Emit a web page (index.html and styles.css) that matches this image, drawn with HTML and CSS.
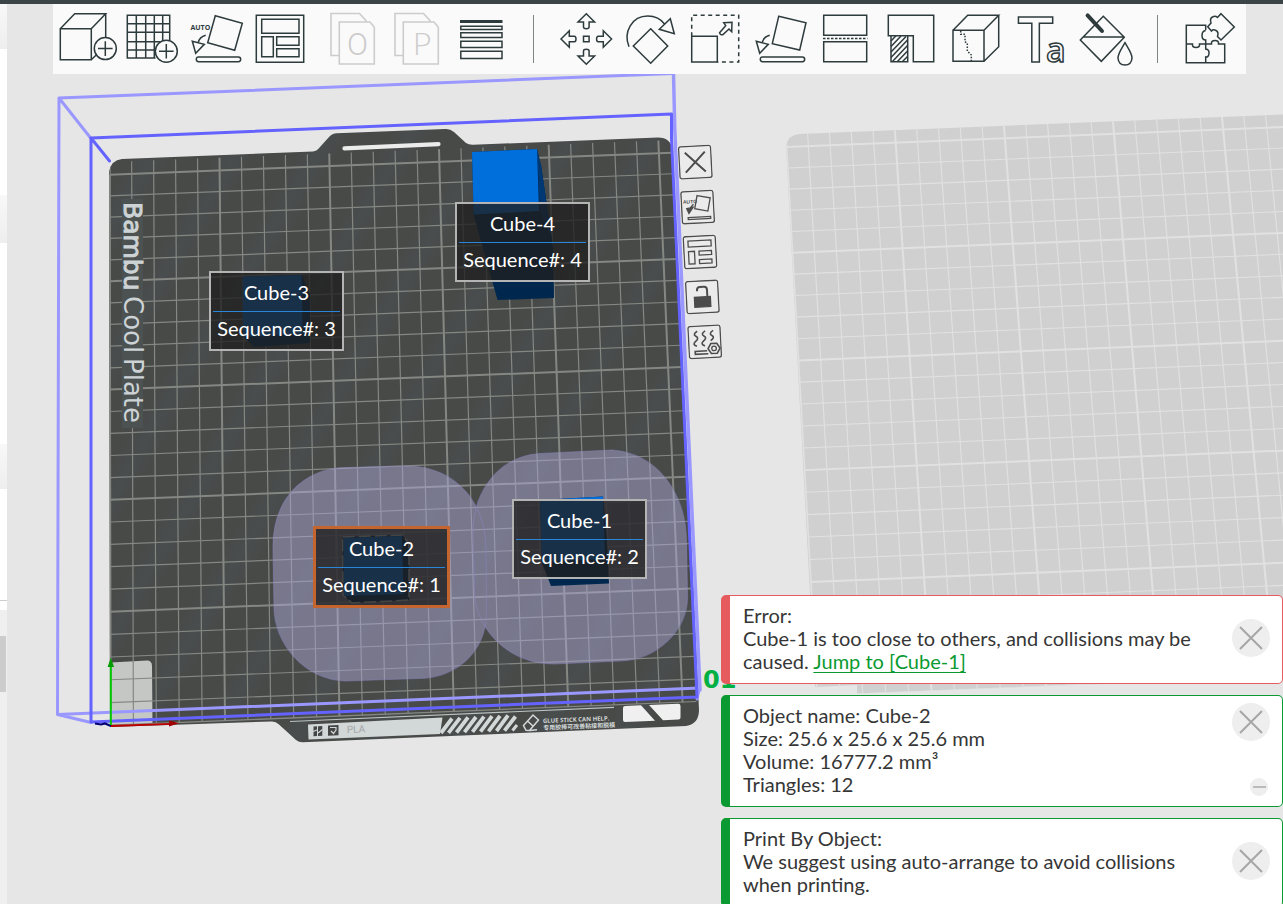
FILE: index.html
```html
<!DOCTYPE html>
<html lang="en">
<head>
<meta charset="utf-8">
<title>Prepare - Print By Object</title>
<link rel="stylesheet" href="styles.css">
</head>
<body>
<header class="titlebar"></header>
<div class="workspace">
  <aside class="sidebar" aria-hidden="true">
    <div class="band band-top"></div>
    <div class="panel panel-printer"></div>
    <div class="band band-filament"></div>
    <div class="panel panel-filament"></div>
    <div class="band band-process"></div>
    <div class="panel panel-process"></div>
    <div class="sidebar-list"><div class="thumb"></div></div>
  </aside>
  <main class="viewport">
    <svg class="scene" viewBox="7 4 1276 900" aria-hidden="true">
      <defs>
        <linearGradient id="steel" gradientUnits="userSpaceOnUse" x1="110" y1="160" x2="140" y2="178" spreadMethod="reflect">
          <stop offset="0" stop-color="#484a48"/><stop offset=".5" stop-color="#484a48"/><stop offset="1" stop-color="#494d4e"/>
        </linearGradient>
        <clipPath id="plateClip"><path d="M109.500 172Q111 160 122 159L658 138Q671 138 673 150L698 702L111 726Z"/></clipPath>
        <clipPath id="plateClip2"><path d="M786 146Q788 135 799 134L1344 112L1403 672L857 694V686L816 688Z"/></clipPath>
      </defs>

      <path d="M786 146Q788 135 799 134L1344 112L1403 672L857 693.500V685L815 687Z" fill="#d0d0d0"/>
      <g id="grid2" clip-path="url(#plateClip2)" stroke="#e1e1e1"></g>

      <path d="M109 172Q111 160 122 159L313 151.500Q317 151 320 147L329 137Q332 133.500 337 133.300L445 129Q450 128.500 454 132L466 143Q469 145 473 144.800L658 137.500Q671 137.500 672.500 150L699 710Q699 724 686 726L303 742.300Q299 742.500 296 740L279 724.500Q276 721.500 272 721.500L110 727Z" fill="url(#steel)"/>
      <path d="M344.500 148.300L438.500 144.200" stroke="#ececec" stroke-width="4.200" stroke-linecap="round"/>
      <path d="M111 662.500L147 660.500Q152 660.500 152 666L152.500 723.500L111 726Z" fill="#c5c7c5"/>
      <g id="grid1" clip-path="url(#plateClip)" stroke="#848782"></g>
      <path d="M109.800 175L110.500 662" stroke="#848782" stroke-width="1.400"/>
      <path d="M290 721.500L614 707.400" stroke="#b9c2c2" stroke-width="1.200"/>

      <g fill="#d2d7d7">
        <path d="M308 724.500L442.500 717.600L440 734L308.500 739.500Z"/>
      </g>
      <g fill="#454746">
        <path d="M313.500 726.500L317 726.300V736L313.500 736.200ZM318 726.200L322.300 726V735.700L318 735.900Z"/>
        <path d="M328 725.600L338.500 725.100V735.200L328 735.700Z"/>
      </g>
      <path d="M313 731.500L317 730M318 733L322.500 729.500M330 727.500H336V730L333.500 733.500L331 731" stroke="#d2d7d7" stroke-width="1.200" fill="none"/>
      <text class="strip-material" x="347" y="733" transform="rotate(-2.300 347 733)">PLA</text>
      <g stroke="#d2d7d7" stroke-width="3.800">
        <path d="M441 733L452 718.500M448.500 732.800L460 717.800M456.500 732.500L468 717.400M464.500 732.200L476 717M472.500 731.900L484 716.600M480.500 731.600L492 716.200M488.500 731.300L500 715.800M496.500 731L508 715.400M504.500 730.700L515.500 716.500"/>
        <path d="M512.500 730.500L517 725" stroke-width="3"/>
      </g>
      <g fill="none" stroke="#d2d7d7" stroke-width="1.500">
        <path d="M523.500 725.500L533 715L538.500 720L529.500 730.500L526 730.300ZM527.500 721L533.500 726.500M530 730.500L537 729.800"/>
      </g>
      <g transform="rotate(-2.300 543 723)">
        <text class="strip-note" x="543" y="723">GLUE STICK CAN HELP.</text>
        <text class="strip-note-cjk" x="543" y="730">专用胶棒可改善粘接和脱模</text>
      </g>
      <path d="M625 706L641 705.200L655 720.700L625 722Q623 722 623 720V708Q623 706 625 706ZM649 705L678 703.800Q680.500 703.700 680.500 706V717.500Q680.500 719.500 678.500 719.600L663 720.200Z" fill="#f0f0f0"/>

      <rect x="122" y="199" width="21" height="229" fill="#4c5152"/>
      <text class="plate-name plate-brand" transform="translate(124 202) rotate(90)">Bambu</text>
      <text class="plate-name" transform="translate(124 296) rotate(90)">Cool</text>
      <text class="plate-name" transform="translate(124 358) rotate(90)">Plate</text>

      <g fill="#aca8d6" opacity=".48">
        <path d="M273 547C273 500 302 469 345 467.500L408 466C456 467 486 503 486 550L486.500 612C486 655 453 678 418 678.500L345 681C303 679 275 643 274 608Z"/>
        <path d="M473 530C474 490 500 456 540 453.500L612 450C656 453 687 492 686.500 545L687.500 596C688 630 657 660 620 661L555 664C505 664 474 625 474.500 590Z"/>
      </g>
      <g fill="none" stroke="#8a86bd" stroke-opacity=".5" stroke-width="1.200">
        <path d="M273 547C273 500 302 469 345 467.500L408 466C456 467 486 503 486 550L486.500 612C486 655 453 678 418 678.500L345 681C303 679 275 643 274 608Z"/>
        <path d="M473 530C474 490 500 456 540 453.500L612 450C656 453 687 492 686.500 545L687.500 596C688 630 657 660 620 661L555 664C505 664 474 625 474.500 590Z"/>
      </g>

      <path d="M472 152L537 149L541 165L553.500 250L554 298L497.500 300L473.600 214.500Z" fill="#00284f"/>
      <path d="M537 149L541 165L552 240L540 211Z" fill="#003873"/>
      <path d="M472 152L537 149L539 211L473.600 214.500Z" fill="#006fdc"/>
      <path d="M242.700 276.700L301.700 275L310 294V343L254 347L243 336Z" fill="#002f5c"/>
      <path d="M242.700 276.700L301.700 275L302.500 334L243 337Z" fill="#006fdc"/>
      <path d="M540 500L603 496.500L607 540L609 583.500L551 586L542 563Z" fill="#00284f"/>
      <path d="M540 500L603 496.500L605 559L542 562Z" fill="#006fdc"/>
      <path d="M342.700 537L402.700 535L409 544V600L352 603L343 595Z" fill="#00284f" stroke="#c8ccce" stroke-width="1.500" stroke-dasharray="12 4"/>
      <path d="M343.500 538L402 536L403.500 594L344 596Z" fill="#006fdc"/>

      <g fill="none" stroke-width="3" stroke-linejoin="round" stroke-linecap="round">
        <path d="M91 138.500L59 98L673 73.500M59 98L57.500 714.500L91 722.500M57.500 714.500L699.500 688L697 699" stroke="#9a98ff"/>
        <path d="M673.500 73.500L674.800 130L700 690" stroke="#9a98ff" stroke-width="3.500"/>
        <path d="M109.500 161L91 138L671.500 114V138L697 697L91 722L91 138" stroke="#6563ff"/>
      </g>

      <path d="M95 723.500L101 724.500L105 723.500L111 726" stroke="#000073" stroke-width="2.200" fill="none"/>
      <path d="M110.800 725V664" stroke="#00c800" stroke-width="2"/>
      <path d="M110.800 657.500L114 667H107.600Z" fill="#009b00"/>
      <path d="M111 726L172 723.800" stroke="#c00000" stroke-width="1.800"/>
      <path d="M179 723.300L169 720.500V726.500Z" fill="#a00000"/>
    </svg>

    <span class="plate-number">01</span>

    <div class="object-label cube-3"><span>Cube-3</span><span>Sequence#: 3</span></div>
    <div class="object-label cube-4"><span>Cube-4</span><span>Sequence#: 4</span></div>
    <div class="object-label cube-1"><span>Cube-1</span><span>Sequence#: 2</span></div>
    <div class="object-label cube-2 selected"><span>Cube-2</span><span>Sequence#: 1</span></div>

    <div class="plate-actions">
      <button type="button" aria-label="Delete plate"><svg viewBox="0 0 34 34"><rect x="1" y="1" width="32" height="32" rx="2"/><path d="M7 7L27 27M27 7L7 27" stroke-width="2"/></svg></button>
      <button type="button" aria-label="Auto orient"><svg viewBox="0 0 34 34"><rect x="1" y="1" width="32" height="32" rx="2"/><path d="M17 5.500L30 8.500L27 21.500L14 18.500ZM7 27H29.500V29H7Z"/><path d="M6 18L12.500 17L8 23ZM13 14L9 18" fill="#4c4c4c"/><text x="2.500" y="13" class="auto-small">AUTO</text></svg></button>
      <button type="button" aria-label="Arrange"><svg viewBox="0 0 34 34"><rect x="1" y="1" width="32" height="32" rx="2"/><path d="M5.500 5.500H28.500V11.500H5.500ZM5.500 16H11.500V28.500H5.500ZM16 16H28.500V20H16ZM16 24.500H28.500V28.500H16Z"/></svg></button>
      <button type="button" aria-label="Lock plate"><svg viewBox="0 0 34 34"><rect x="1" y="1" width="32" height="32" rx="2"/><rect x="9" y="17" width="16" height="10" fill="#4c4c4c"/><path d="M22 17V10Q22 7 19 7H15Q12 7 12 10V11" stroke-width="2"/></svg></button>
      <button type="button" aria-label="Plate settings"><svg viewBox="0 0 34 34"><rect x="1" y="1" width="32" height="32" rx="2"/><path d="M10 6Q5 9 8.500 11T8 16T9 21M18 6Q13 9 16.500 11T16 16T17 21M26 6Q21 9 24.500 11T23 16M19 26H7V29H20M20 24L23 19H29L32 24L29 29H23Z" stroke-width="1.600"/><circle cx="26" cy="24" r="2.300"/></svg></button>
    </div>

    <nav class="toolbar" aria-label="Tools">
      <div class="tool-group">
        <button type="button" aria-label="Add"><svg viewBox="53 4 65 70"><path d="M60.300 28.700H91.300V59.700H60.300ZM60.300 28.700L74.700 13.700H105.700L91.300 28.700M105.700 13.700V37.500M91.300 59.700L96.700 54.500"/><circle cx="105.300" cy="48.600" r="11"/><path d="M98 48.600H112.600M105.300 41.300V55.900"/></svg></button>
        <button type="button" aria-label="Add plate"><svg viewBox="118 4 65 70"><path d="M155.500 58H127.300V15.300H169.700V40M136.300 15.300V58M145.700 15.300V58M154.300 15.300V58M162.700 15.300V41M127.300 23.700H169.700M127.300 32.300H169.700M127.300 41.700H160M127.300 50H155"/><circle cx="166.300" cy="51.300" r="11"/><path d="M159 51.300H173.600M166.300 44V58.600"/></svg></button>
        <button type="button" aria-label="Auto orient"><svg viewBox="183 4 65 70"><text class="auto-text" x="190.500" y="29.500">AUTO</text><path d="M215.300 15.700L242.300 23.300L234.700 50.300L207.700 42.700ZM192.300 41.300L204.300 44.300L195.700 53.300ZM205.700 35.300Q199.500 37 198.300 42.500M198.600 57H238.400Q240.700 57 240.700 59.300T238.400 61.700H198.600Q196.300 61.700 196.300 59.300T198.600 57Z"/></svg></button>
        <button type="button" aria-label="Arrange all"><svg viewBox="248 4 65 70"><path d="M256.300 15.300H303.700V62.300H256.300ZM261.700 19.300H299V33.300H261.700ZM261.700 36.700H273.300V56.700H261.700ZM276.700 36.700H299V45.300H276.700ZM276.700 48.700H299V56.700H276.700Z"/></svg></button>
      </div>
      <div class="tool-group">
        <button type="button" disabled aria-label="Split to objects"><svg viewBox="319 4 65 70"><path d="M339.300 55.500H331V13.500H359.500L366 20.500V22M339.300 22H370L374.300 27.300V64H339.300Z"/><text class="doc-letter doc-o" x="357.500" y="54.500">O</text></svg></button>
        <button type="button" disabled aria-label="Split to parts"><svg viewBox="384 4 65 70"><path d="M403.300 55.500H395V13.500H423.500L430 20.500V22M403.300 22H434L438.300 27.300V64H403.300Z"/><text class="doc-letter" x="422" y="54.500">P</text></svg></button>
        <button type="button" aria-label="Variable layer height"><svg viewBox="449 4 65 70"><path d="M460 21.500H502.500" stroke-width="3"/><path d="M460.800 26.200H502V29.500H460.800ZM460.800 32.700H502V37.500H460.800ZM460.800 41.300H502V47.500H460.800ZM460.800 51.300H502V58.600H460.800Z"/></svg></button>
      </div>
      <div class="separator"></div>
      <div class="tool-group">
        <button type="button" aria-label="Move"><svg viewBox="553 4 65 70"><path d="M583.500 36.200H589.100V41.800H583.500Z"/><path id="arrowUp" d="M586.300 13.700L594.600 22H589.100V27Q589.100 28.700 586.300 28.700T583.500 27V22H578Z"/><use href="#arrowUp" transform="rotate(90 586.300 39)"/><use href="#arrowUp" transform="rotate(180 586.300 39)"/><use href="#arrowUp" transform="rotate(270 586.300 39)"/></svg></button>
        <button type="button" aria-label="Rotate"><svg viewBox="618 4 65 70"><path d="M650.700 28.700L667.700 46L650.700 63.300L633.300 46ZM629 46.700C623 32 632 16 647.700 16C655 16 661 19 665 24.500M670.300 18.700L674.300 33.700L659.300 29.300Z"/></svg></button>
        <button type="button" aria-label="Scale"><svg viewBox="683 4 65 70"><path d="M691.700 36.300V15.300H738.700V62H717.300" stroke-dasharray="4 3.500"/><path d="M691.700 36.300H717.300V62H691.700ZM723.700 22.700L732 22.300L731.700 31.700L729 29L723 34.500Q720.500 35.500 719.600 32.700L725.700 25.700Z"/></svg></button>
        <button type="button" aria-label="Lay on face"><svg viewBox="748 4 65 70"><path d="M778.700 16.300L806 22.700L799.700 50L772.300 43.700ZM756.300 41.300L768.300 44.300L759.700 53.300ZM769.700 35.300Q763.500 37 762.300 42.500M762.600 57H802.400Q804.700 57 804.700 59.300T802.400 61.700H762.600Q760.300 61.700 760.300 59.300T762.600 57Z"/></svg></button>
        <button type="button" aria-label="Cut"><svg viewBox="813 4 65 70"><path d="M823.700 15.300H866.700V35.300H823.700ZM823.700 41.700H866.700V61.700H823.700Z"/><path d="M823 38.500H867.500" stroke-dasharray="2.500 1.500"/></svg></button>
        <button type="button" aria-label="Support painting"><svg viewBox="878 4 65 70"><path d="M888.300 15.300H933.700V61.700H913.300V35.700H888.300ZM891 35.700H907.700V61.700H891Z"/><path d="M891 41L896 35.700M891 46.500L901 36M891 52L906 36.500M891 57.500L907.500 40M892.500 61.500L907.500 45.500M897.500 61.500L907.500 51M902.500 61.500L907.500 56.500"/></svg></button>
        <button type="button" aria-label="Seam painting"><svg viewBox="943 4 65 70"><path d="M953 30.300H984V61.300H953ZM953 30.300L967.700 15.300H998.700L984 30.300M998.700 15.300V46.700L984 61.300"/><path d="M960.700 31V34.300H965V41.700L967.300 43.300V51L971.300 55V61" stroke-dasharray="1.500 1.500"/></svg></button>
        <button type="button" aria-label="Text shape"><svg viewBox="1008 4 65 70"><text class="shape-text shape-t" x="1017.500" y="61.500">T</text><text class="shape-text shape-a" x="1046" y="61.500">a</text></svg></button>
        <button type="button" aria-label="Color painting"><svg viewBox="1073 4 65 70"><path d="M1103.300 16.300L1124.300 37.300L1101.300 61.300L1080.300 40ZM1083.500 37H1124"/><path d="M1087.600 15.400L1102 31" stroke-width="4" stroke-linecap="round"/><path d="M1125 42.700C1128 48 1132 53 1132 58Q1131.500 65 1125 65T1118 58C1118 53 1122 48 1125 42.700Z"/></svg></button>
      </div>
      <div class="separator"></div>
      <div class="tool-group">
        <button type="button" aria-label="Assembly view"><svg viewBox="1177 4 65 70"><path d="M1205.700 30V25.300H1186.300V62.700H1224.700V44H1218.500Q1219 40.500 1215 40.500T1211.500 44H1205.700V40Q1202 40 1202 35.500T1205.700 30.500M1186.300 44H1192.500Q1192 47.500 1196 47.500T1199.500 44H1205.700V49Q1209.500 49.500 1209 53.500T1205.700 57V62.700"/><path d="M1221 13.700L1234.300 27L1221 40L1217.500 36.500Q1219 32 1216 30.500T1211.500 31L1207.700 26.700L1211 23Q1209.500 18.500 1212.500 17T1217.500 17.500Z"/></svg></button>
      </div>
    </nav>

    <section class="toasts" aria-label="Notifications">
      <article class="toast error">
        <p>Error:<br>Cube-1 is too close to others, and collisions may be caused. <a href="#cube-1">Jump to [Cube-1]</a></p>
        <button type="button" class="close" aria-label="Close"><svg viewBox="0 0 38 38"><path d="M8 8L30 30M30 8L8 30"/></svg></button>
      </article>
      <article class="toast info">
        <p>Object name: Cube-2<br>Size: 25.6 x 25.6 x 25.6 mm<br>Volume: 16777.2 mm³<br>Triangles: 12</p>
        <div class="toast-buttons">
          <button type="button" class="close" aria-label="Close"><svg viewBox="0 0 38 38"><path d="M8 8L30 30M30 8L8 30"/></svg></button>
          <button type="button" class="minimize" aria-label="Minimize"><svg viewBox="0 0 18 18"><path d="M3 9H16"/></svg></button>
        </div>
      </article>
      <article class="toast info">
        <p>Print By Object:<br>We suggest using auto-arrange to avoid collisions when printing.</p>
        <button type="button" class="close" aria-label="Close"><svg viewBox="0 0 38 38"><path d="M8 8L30 30M30 8L8 30"/></svg></button>
      </article>
    </section>
  </main>
</div>
<script src="scene.js"></script>
</body>
</html>
```
FILE: styles.css
```css
* { box-sizing: border-box; }

body {
  margin: 0;
  height: 100vh;
  overflow: hidden;
  display: flex;
  flex-direction: column;
  font-family: Lato, "Open Sans", sans-serif;
  font-size: 20px;
  line-height: 23px;
  color: #363636;
  background: #e6e6e6;
}

button {
  padding: 0;
  border: 0;
  background: none;
  cursor: pointer;
}

svg { display: block; }

.titlebar { height: 4px; flex: none; background: #3b4446; }
.workspace { flex: 1; min-height: 0; display: flex; }

.sidebar {
  width: 7px;
  flex: none;
  display: flex;
  flex-direction: column;
  background: #fff;
}
.band { background: linear-gradient(#f8f8f8, #eeeeee); }
.band-top { height: 45px; }
.band-filament { height: 48px; }
.band-process { height: 45px; }
.panel-printer { height: 146px; }
.panel-filament { height: 201px; }
.panel-process { height: 121px; background: linear-gradient(#cecece, #cecece) 0 111px / 100% 1px no-repeat; }
.sidebar-list { flex: 1; padding-top: 26px; background: #efefef; }
.thumb { width: 6px; height: 56px; background: #cccccc; }

.viewport { flex: 1; min-width: 0; position: relative; overflow: hidden; }
.scene { position: absolute; left: 0; top: 0; width: 1276px; height: 900px; }

.plate-name { font: 26px "DejaVu Sans", sans-serif; fill: #cdd3d5; }
.plate-brand { font-size: 25px; stroke: #cdd3d5; stroke-width: 1; }
.strip-material { font: 10px Roboto, sans-serif; fill: #a3a8a8; }
.strip-note { font: bold 6px "Open Sans", sans-serif; fill: #d2d7d7; }
.strip-note-cjk { font: bold 6px "Noto Sans CJK SC", sans-serif; fill: #d2d7d7; }

.plate-number {
  position: absolute;
  left: 696px;
  top: 664px;
  font: bold 24px/24px "DejaVu Sans", sans-serif;
  color: #00b043;
}

.object-label {
  position: absolute;
  width: 135px;
  height: 80px;
  padding: 0 2px;
  border: 2px solid #b4b4b4;
  background: rgba(31, 31, 31, .78);
  color: #fff;
  text-align: center;
  white-space: nowrap;
}
.object-label span { display: block; padding: 8px 0 7px; }
.object-label span + span { border-top: 1px solid #2a86d8; padding: 5px 0; }
.object-label.selected { border: 3px solid #c4642f; width: 137px; height: 82px; padding: 0 2px; }
.cube-1 { left: 505px; top: 495px; }
.cube-2 { left: 306px; top: 522px; }
.cube-3 { left: 202px; top: 267px; }
.cube-4 { left: 448px; top: 198px; }

.plate-actions {
  position: absolute;
  left: 676px;
  top: 141px;
  display: flex;
  flex-direction: column;
  gap: 11px;
  transform: rotate(-3deg);
}
.plate-actions svg { width: 34px; height: 34px; fill: none; stroke: #4c4c4c; stroke-width: 1.3; }
.plate-actions button { background: #ebebeb; }
.auto-small { font: bold 5px "Liberation Sans", sans-serif; fill: #4c4c4c; stroke: none; }

.toolbar {
  position: relative;
  display: flex;
  align-items: center;
  width: fit-content;
  height: 70px;
  margin-left: 46px;
  padding-right: 4px;
  background: #fafafa;
}
.tool-group { display: flex; }
.tool-group + .tool-group { margin-left: 6px; }
.tool-group svg { width: 65px; height: 70px; overflow: visible; fill: none; stroke: #2e3b3d; stroke-width: 1.5; }
.tool-group button:disabled svg { stroke: #cccccc; stroke-width: 1.6; }
.separator { width: 1px; height: 48px; margin: 0 19px; background: #7d8484; }
.auto-text { font: bold 7px "Open Sans", sans-serif; fill: #2e3b3d; stroke: none; }
.doc-letter { font: 300 32px Lato, sans-serif; fill: #cccccc; stroke: none; text-anchor: middle; }
.doc-o { font: 300 31px "Liberation Sans Narrow", "Roboto", sans-serif; }
.shape-text { font-family: "Open Sans", sans-serif; font-weight: 600; }
.shape-t { font-size: 64px; }
.shape-a { font-size: 34px; }

.toasts {
  position: absolute;
  right: 0;
  top: 591px;
  width: 562px;
  display: flex;
  flex-direction: column;
  gap: 11px;
}
.toast {
  display: flex;
  justify-content: space-between;
  align-items: center;
  padding: 7px 12px 10px 13px;
  border: 1px solid;
  border-left-width: 9px;
  border-radius: 5px;
  background: #fff;
}
.toast.error { border-color: #e65c5e; }
.toast.info { border-color: #0a9a31; }
.toast p { margin: 0; padding-top: 1px; width: 470px; }
.toast a { color: #0a9a31; text-underline-offset: 3px; text-decoration-thickness: 1px; }
.toast-buttons {
  align-self: stretch;
  display: flex;
  flex-direction: column;
  justify-content: space-between;
  align-items: flex-end;
}
.close, .minimize { display: block; border-radius: 50%; background: #eeeeee; }
.close svg { width: 38px; height: 38px; stroke: #a6a6a6; stroke-width: 2; }
.minimize { margin-right: 2px; }
.minimize svg { width: 18px; height: 18px; stroke: #bbbbbb; stroke-width: 2; }
```
FILE: scene.js
```js
// Draws a 256 mm plate grid (10 mm pitch) in perspective.
// corners: origin, x-end, far corner, y-end, in scene coordinates.
function projector([p0, p1, p2, p3]) {
  const dx1 = p1[0] - p2[0], dx2 = p3[0] - p2[0], sx = p0[0] - p1[0] + p2[0] - p3[0];
  const dy1 = p1[1] - p2[1], dy2 = p3[1] - p2[1], sy = p0[1] - p1[1] + p2[1] - p3[1];
  const det = dx1 * dy2 - dx2 * dy1;
  const g = (sx * dy2 - dx2 * sy) / det;
  const h = (dx1 * sy - sx * dy1) / det;
  const a = p1[0] - p0[0] + g * p1[0], b = p3[0] - p0[0] + h * p3[0];
  const d = p1[1] - p0[1] + g * p1[1], e = p3[1] - p0[1] + h * p3[1];
  return (u, v) => {
    const w = g * u + h * v + 1;
    return [(a * u + b * v + p0[0]) / w, (d * u + e * v + p0[1]) / w];
  };
}

function drawGrid(id, corners, thin, thick) {
  const at = projector(corners);
  const group = document.getElementById(id);
  const line = (from, to, width) => {
    const el = document.createElementNS("http://www.w3.org/2000/svg", "path");
    el.setAttribute("d", `M${from}L${to}`);
    el.setAttribute("stroke-width", width);
    group.appendChild(el);
  };
  for (let k = 0; k <= 25; k++) {
    const t = k / 25.6, width = k % 5 ? thin : thick;
    line(at(t, 0), at(t, 1), width);
    line(at(0, t), at(1, t), width);
  }
}

drawGrid("grid1", [[110.5, 725.5], [696.3, 702], [671.5, 140], [109.7, 162]], 1.2, 2);
drawGrid("grid2", [[817, 696], [1403, 672], [1344, 112], [785.8, 134.5]], 1.1, 2);
```
